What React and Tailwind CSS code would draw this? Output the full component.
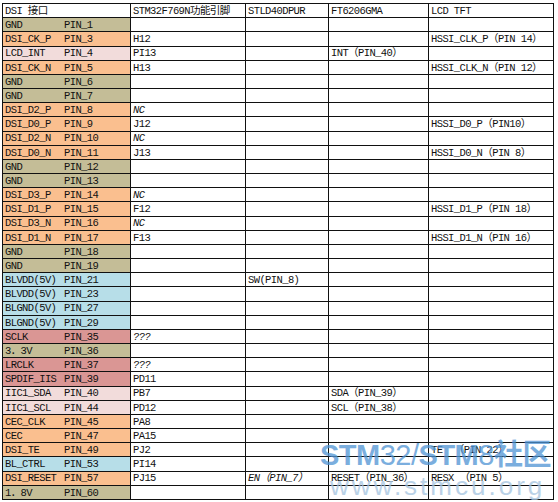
const TAN = 'bg-[#c4bd97]';
const ORANGE = 'bg-[#fabf8f]';
const PINK = 'bg-[#f2dcdb]';
const BLUE = 'bg-[#b7dee8]';
const RED = 'bg-[#da9694]';

// name, pin, colour, stm32, stld40dpur, ft6206, lcd
const rows = [
  ['GND', 'PIN_1', TAN],
  ['DSI_CK_P', 'PIN_3', ORANGE, 'H12', '', '', 'HSSI_CLK_P（PIN 14）'],
  ['LCD_INT', 'PIN_4', PINK, 'PI13', '', 'INT（PIN_40）'],
  ['DSI_CK_N', 'PIN_5', ORANGE, 'H13', '', '', 'HSSI_CLK_N（PIN 12）'],
  ['GND', 'PIN_6', TAN],
  ['GND', 'PIN_7', TAN],
  ['DSI_D2_P', 'PIN_8', ORANGE, '*NC'],
  ['DSI_D0_P', 'PIN_9', ORANGE, 'J12', '', '', 'HSSI_D0_P（PIN10）'],
  ['DSI_D2_N', 'PIN_10', ORANGE, '*NC'],
  ['DSI_D0_N', 'PIN_11', ORANGE, 'J13', '', '', 'HSSI_D0_N（PIN 8）'],
  ['GND', 'PIN_12', TAN],
  ['GND', 'PIN_13', TAN],
  ['DSI_D3_P', 'PIN_14', ORANGE, '*NC'],
  ['DSI_D1_P', 'PIN_15', ORANGE, 'F12', '', '', 'HSSI_D1_P（PIN 18）'],
  ['DSI_D3_N', 'PIN_16', ORANGE, '*NC'],
  ['DSI_D1_N', 'PIN_17', ORANGE, 'F13', '', '', 'HSSI_D1_N（PIN 16）'],
  ['GND', 'PIN_18', TAN],
  ['GND', 'PIN_19', TAN],
  ['BLVDD(5V)', 'PIN_21', BLUE, '', 'SW(PIN_8)'],
  ['BLVDD(5V)', 'PIN_23', BLUE],
  ['BLGND(5V)', 'PIN_27', BLUE],
  ['BLGND(5V)', 'PIN_29', BLUE],
  ['SCLK', 'PIN_35', RED, '*???'],
  ['3．3V', 'PIN_36', TAN],
  ['LRCLK', 'PIN_37', RED, '*???'],
  ['SPDIF_IIS', 'PIN_39', RED, 'PD11'],
  ['IIC1_SDA', 'PIN_40', PINK, 'PB7', '', 'SDA（PIN_39）'],
  ['IIC1_SCL', 'PIN_44', PINK, 'PD12', '', 'SCL（PIN_38）'],
  ['CEC_CLK', 'PIN_45', ORANGE, 'PA8'],
  ['CEC', 'PIN_47', ORANGE, 'PA15'],
  ['DSI_TE', 'PIN_49', ORANGE, 'PJ2', '', '', 'TE  （PIN 22）'],
  ['BL_CTRL', 'PIN_53', BLUE, 'PI14'],
  ['DSI_RESET', 'PIN_57', ORANGE, 'PJ15', '*EN（PIN_7）', 'RESET（PIN_36）', 'RESX （PIN 5）'],
  ['1．8V', 'PIN_60', TAN],
];

const Cell = ({ text = '', className = '' }) => {
  const italic = text.startsWith('*');
  return (
    <div className={`flex items-center overflow-hidden whitespace-pre bg-white pl-[2px] pt-[1px] ${italic ? 'italic' : ''} ${className}`}>
      {italic ? text.slice(1) : text}
    </div>
  );
};

export default function App() {
  return (
    <div className="relative h-[502px] w-[558px] overflow-hidden bg-white pl-[2px] pt-[3px]">
      <div
        className="grid h-[497px] w-[552px] grid-cols-[127px_114px_82px_99px_124px] grid-rows-[repeat(35,minmax(0,1fr))] gap-px bg-[#111] p-px text-[10.5px] leading-none tracking-[-0.6px] text-[#111]"
        style={{ fontFamily: '"Liberation Mono", "Noto Sans CJK SC", monospace' }}
      >
        <Cell text="DSI 接口" />
        <Cell text="STM32F769N功能引脚" />
        <Cell text="STLD40DPUR" />
        <Cell text="FT6206GMA" />
        <Cell text="LCD TFT" />
        {rows.map(([name, pin, color, c2 = '', c3 = '', c4 = '', c5 = ''], i) => (
          <div key={i} className="contents">
            <div className={`flex items-center whitespace-pre pl-[2px] pt-[1px] ${color}`}>
              <span className="w-[59px]">{name}</span>
              <span>{pin}</span>
            </div>
            <Cell text={c2} />
            <Cell text={c3} />
            <Cell text={c4} />
            <Cell text={c5} />
          </div>
        ))}
      </div>

      <div
        className="pointer-events-none absolute left-[320px] top-[441px] flex flex-col leading-none opacity-75"
        style={{ fontFamily: '"Liberation Sans", "Noto Sans CJK SC", sans-serif' }}
      >
        <div className="text-[29px] tracking-[-0.5px] text-[#4f94d4]">
          <span className="font-bold">STM</span>
          <span className="font-light">32/</span>
          <span className="font-bold">STM</span>
          <span className="font-light">8</span>
          <span className="font-bold">社区</span>
        </div>
        <div className="ml-[10px] mt-[3px] text-[26px] tracking-[3px] text-[#a3c3e0]">www.stmcu.org</div>
      </div>
    </div>
  );
}
